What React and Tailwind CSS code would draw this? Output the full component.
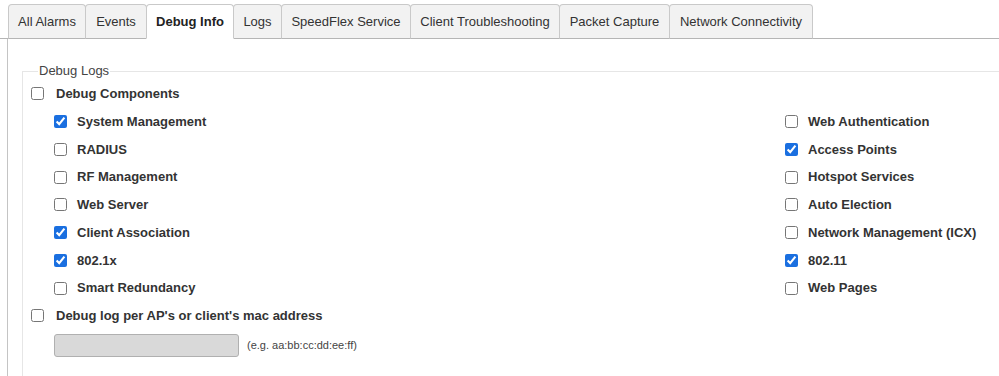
import React, { useState } from 'react';

const tabs = [
  { name: 'All Alarms', w: 'w-[78px]' },
  { name: 'Events', w: 'w-[62px]' },
  { name: 'Debug Info', w: 'w-[88px]' },
  { name: 'Logs', w: 'w-[49px]' },
  { name: 'SpeedFlex Service', w: 'w-[130px]' },
  { name: 'Client Troubleshooting', w: 'w-[150px]' },
  { name: 'Packet Capture', w: 'w-[111px]' },
  { name: 'Network Connectivity', w: 'w-[144px]' },
];

const leftItems = [
  { label: 'System Management', checked: true },
  { label: 'RADIUS', checked: false },
  { label: 'RF Management', checked: false },
  { label: 'Web Server', checked: false },
  { label: 'Client Association', checked: true },
  { label: '802.1x', checked: true },
  { label: 'Smart Redundancy', checked: false },
];

const rightItems = [
  { label: 'Web Authentication', checked: false },
  { label: 'Access Points', checked: true },
  { label: 'Hotspot Services', checked: false },
  { label: 'Auto Election', checked: false },
  { label: 'Network Management (ICX)', checked: false },
  { label: '802.11', checked: true },
  { label: 'Web Pages', checked: false },
];

function Check({ label, defaultChecked, gap = 'gap-[10px]' }) {
  const [on, setOn] = useState(defaultChecked);
  return (
    <label className={`flex h-[27.75px] items-center ${gap} cursor-pointer`}>
      <input
        type="checkbox"
        checked={on}
        onChange={() => setOn(!on)}
        className="m-0 h-[13px] w-[13px] accent-[#1a6fe0]"
      />
      <span className="text-[13px] font-bold text-[#333]">{label}</span>
    </label>
  );
}

export default function App() {
  const [active, setActive] = useState('Debug Info');

  return (
    <div className="h-[376px] w-[999px] overflow-hidden bg-white font-['Liberation_Sans',Arial,sans-serif] text-[#333]">
      {/* tab strip */}
      <div className="flex h-[39px] items-end border-b border-[#b5b5b5] pl-[8px]">
        {tabs.map((t, i) => {
          const isActive = t.name === active;
          return (
            <button
              key={t.name}
              onClick={() => setActive(t.name)}
              className={`relative -mb-px flex h-[35px] ${t.w} items-center justify-center rounded-t-[4px] border border-[#c9c9c9] text-[13px] ${
                i > 0 ? '-ml-px' : ''
              } ${isActive ? 'z-10 border-b-white bg-white font-bold text-[#222]' : 'border-b-[#b5b5b5] bg-[#f2f2f2] text-[#333]'}`}
            >
              {t.name}
            </button>
          );
        })}
      </div>

      {/* content */}
      <div className="ml-[7px] h-[337px] border-l border-[#c4c4c4] pl-[14px] pt-[24px]">
        <fieldset className="border-l border-t border-[#e6e6e6] pl-[8px]">
          <legend className="ml-[7px] px-[1px] text-[13px] leading-[16px] text-[#444]">Debug Logs</legend>

          <div className="mt-px">
            <Check label="Debug Components" defaultChecked={false} gap="gap-[12px]" />
          </div>

          <div className="flex pl-[23px]">
            <div className="w-[731px]">
              {leftItems.map((it) => (
                <Check key={it.label} label={it.label} defaultChecked={it.checked} />
              ))}
            </div>
            <div>
              {rightItems.map((it) => (
                <Check key={it.label} label={it.label} defaultChecked={it.checked} />
              ))}
            </div>
          </div>

          <Check label="Debug log per AP's or client's mac address" defaultChecked={false} gap="gap-[12px]" />

          <div className="mt-[4px] flex items-center gap-[8px] pl-[23px]">
            <input
              type="text"
              disabled
              className="h-[23px] w-[185px] rounded-[3px] border border-[#b0b0b0] bg-[#d9d9d9]"
            />
            <span className="text-[11px] text-[#444]">(e.g. aa:bb:cc:dd:ee:ff)</span>
          </div>
          <div className="h-[30px]" />
        </fieldset>
      </div>
    </div>
  );
}
